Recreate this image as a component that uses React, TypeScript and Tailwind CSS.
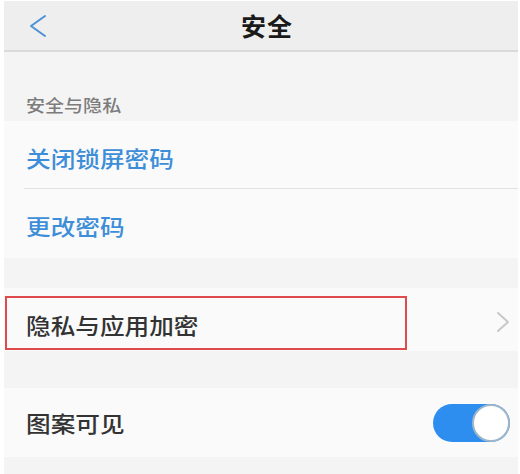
import React from "react";

const Row = ({ children, className = "" }: { children: React.ReactNode; className?: string }) => (
  <div className={`flex items-center bg-[#fafafa] pl-[22px] ${className}`}>{children}</div>
);

// the screenshot is slightly stretched sideways, so the text is too
const Wide = ({ children, className = "" }: { children: React.ReactNode; className?: string }) => (
  <span className={`inline-block origin-left scale-x-[1.12] ${className}`}>{children}</span>
);

export default function App() {
  return (
    <div className="w-[520px] h-[474px] overflow-hidden bg-white pl-[4px] pr-[2px] pt-px font-['Noto_Sans_CJK_SC',sans-serif]">
      <div className="flex h-full flex-col bg-[#f4f4f4]">
        {/* header */}
        <div className="flex h-[51px] shrink-0 items-center border-b-2 border-[#dadada] bg-[#eeeeee]">
          <svg className="ml-[25px]" width="18" height="24" viewBox="0 0 18 24" fill="none">
            <path d="M16 2 L2 12 L16 22" stroke="#4b91d6" strokeWidth="2" strokeLinecap="round" strokeLinejoin="round" />
          </svg>
          <div className="flex-1 pr-[31px] text-center text-[25px] font-bold leading-none tracking-[1px] text-[#1a1a1a]">
            安全
          </div>
        </div>

        {/* section label */}
        <div className="h-[69px] shrink-0 pl-[22px] pt-[43px] text-[17px] leading-[20px] text-[#7c7c7c]">
          <Wide className="font-medium">安全与隐私</Wide>
        </div>

        <Row className="h-[67px] pt-[6px] text-[22px] text-[#3d8ed8]">
          <Wide className="font-medium">关闭锁屏密码</Wide>
        </Row>
        <div className="h-px shrink-0 bg-[#fafafa] pl-[20px]">
          <div className="h-px bg-[#e2e2e2]" />
        </div>
        <Row className="h-[69px] pt-[3px] text-[22px] text-[#3d8ed8]">
          <Wide className="font-medium">更改密码</Wide>
        </Row>

        <div className="h-[30px] shrink-0" />

        <div className="relative flex h-[63px] shrink-0 items-center justify-between bg-[#fafafa] pl-[22px] pr-[8px] pt-[10px]">
          <Wide className="text-[22px] font-medium text-[#333333]">隐私与应用加密</Wide>
          <svg width="14" height="22" viewBox="0 0 14 22" fill="none" className="mt-[-6px]">
            <path d="M2 2 L12 11 L2 20" stroke="#c8c8c8" strokeWidth="2" strokeLinecap="round" strokeLinejoin="round" />
          </svg>
          <div className="absolute left-[1px] top-[8px] h-[54px] w-[402px] border-2 border-[#df4a4d]" />
        </div>

        <div className="h-[37px] shrink-0" />

        <div className="flex h-[69px] shrink-0 items-center justify-between bg-[#fafafa] pl-[22px] pr-[8px]">
          <Wide className="text-[22px] font-medium text-[#333333]">图案可见</Wide>
          <div className="flex h-[38px] w-[77px] items-center justify-end rounded-full bg-[#2d8ef0]">
            <div className="h-[38px] w-[38px] rounded-full border-2 border-[#9fb6c9] bg-white" />
          </div>
        </div>
      </div>
    </div>
  );
}
